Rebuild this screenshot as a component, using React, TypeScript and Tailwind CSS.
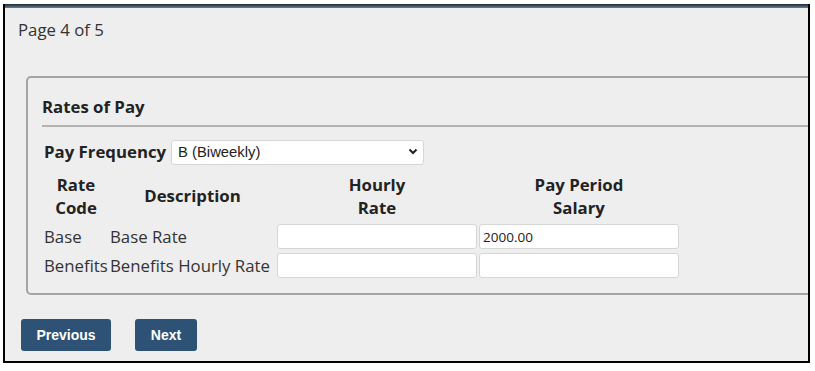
import React, { useState } from "react";

const PayRatesPage: React.FC = () => {
  const [frequency, setFrequency] = useState("B");
  const [salary, setSalary] = useState("2000.00");

  const inputClass =
    "block w-[200px] h-[25px] bg-white border border-[#d6d6d6] rounded-[3px] px-[3px] text-[13.5px] text-[#222] focus:outline-none";

  return (
    <div className="w-[815px] h-[371px] bg-white pt-[4px] pl-[3px] font-['Open_Sans','Noto_Sans',sans-serif] text-[#333]">
      <div className="w-[807px] h-[359px] border-2 border-black border-t-0 bg-[#eeeeee] overflow-hidden flex flex-col">
        <div className="h-[4px] bg-gradient-to-b from-[#1e2a36] to-[#6b7f93] flex-shrink-0" />
        <div className="pl-[13px] pt-[12px] text-[16.8px] leading-[20px]">Page 4 of 5</div>

        <div className="mt-[36px] ml-[21px] w-[900px] h-[219px] border-2 border-[#a4a4a4] rounded-[5px] pl-[14px] pt-[19px]">
          <h3 className="font-bold text-[16.8px] leading-[20px] text-[#222]">Rates of Pay</h3>
          <div className="mt-[8px] h-[2px] bg-[#b3b3b3]" />

          <div className="mt-[12px] ml-[2px] flex items-center gap-[5px]">
            <span className="font-bold text-[16.8px] text-[#222]">Pay Frequency</span>
            <div className="relative">
              <select
                value={frequency}
                onChange={(e) => setFrequency(e.target.value)}
                className="appearance-none w-[253px] h-[25px] bg-white border border-[#d6d6d6] rounded-[3px] pl-[6px] text-[14.8px] font-['Liberation_Sans',Arial,sans-serif] text-[#222] focus:outline-none"
              >
                <option value="W">W (Weekly)</option>
                <option value="B">B (Biweekly)</option>
                <option value="S">S (Semimonthly)</option>
                <option value="M">M (Monthly)</option>
              </select>
              <svg
                className="absolute right-[6px] top-[9px] pointer-events-none"
                width="10"
                height="7"
                viewBox="0 0 10 7"
              >
                <path d="M1.5 1.5 L5 5 L8.5 1.5" stroke="#222" strokeWidth="2" fill="none" />
              </svg>
            </div>
          </div>

          <table className="mt-[5px] border-separate border-spacing-[2px] table-fixed text-[16.8px]">
            <colgroup>
              <col className="w-[64px]" />
              <col className="w-[165px]" />
              <col className="w-[200px]" />
              <col className="w-[200px]" />
            </colgroup>
            <thead>
              <tr className="text-[#222] text-center leading-[23px]">
                <th className="px-0 pt-[1px] pb-[3px] font-bold">
                  Rate
                  <br />
                  Code
                </th>
                <th className="px-0 pt-[1px] pb-[3px] font-bold">Description</th>
                <th className="px-0 pt-[1px] pb-[3px] font-bold">
                  Hourly
                  <br />
                  Rate
                </th>
                <th className="px-0 pt-[1px] pb-[3px] font-bold">
                  Pay Period
                  <br />
                  Salary
                </th>
              </tr>
            </thead>
            <tbody>
              <tr className="h-[26px]">
                <td className="p-0 whitespace-nowrap">Base</td>
                <td className="p-0 whitespace-nowrap">Base Rate</td>
                <td className="p-0">
                  <input type="text" className={inputClass} />
                </td>
                <td className="p-0">
                  <input
                    type="text"
                    value={salary}
                    onChange={(e) => setSalary(e.target.value)}
                    className={inputClass}
                  />
                </td>
              </tr>
              <tr className="h-[27px]">
                <td className="p-0 whitespace-nowrap">Benefits</td>
                <td className="p-0 whitespace-nowrap">Benefits Hourly Rate</td>
                <td className="p-0 pt-[1px]">
                  <input type="text" className={inputClass} />
                </td>
                <td className="p-0 pt-[1px]">
                  <input type="text" className={inputClass} />
                </td>
              </tr>
            </tbody>
          </table>
        </div>

        <div className="mt-[24px] ml-[16px] flex gap-[24px] font-['Liberation_Sans',Arial,sans-serif]">
          <button className="w-[90px] h-[32px] bg-[#2d5275] text-white font-bold text-[14px] rounded-[3px]">
            Previous
          </button>
          <button className="w-[62px] h-[32px] bg-[#2d5275] text-white font-bold text-[14px] rounded-[3px]">
            Next
          </button>
        </div>
      </div>
    </div>
  );
};

export default function App() {
  return <PayRatesPage />;
}
